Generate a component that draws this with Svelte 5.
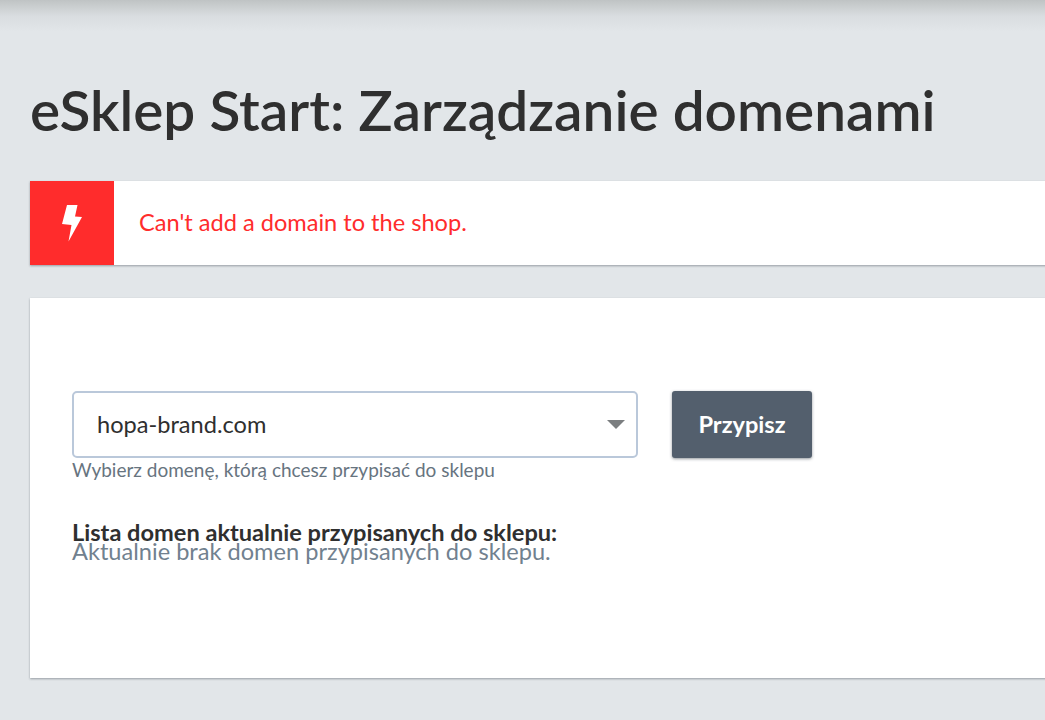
<script>
  let domain = $state('hopa-brand.com');
</script>

<div class="page">
  <div class="topshade"></div>
  <h1>eSklep Start: Zarządzanie domenami</h1>

  <div class="alert">
    <div class="alert-icon">
      <svg width="20" height="37" viewBox="0 0 20 37" aria-hidden="true">
        <path d="M5 0 L15.5 0 L13 11.5 L20 12 L6.5 36.5 L9.5 20 L0 19 Z" fill="#fff" />
      </svg>
    </div>
    <p class="alert-text">Can't add a domain to the shop.</p>
  </div>

  <div class="card">
    <div class="form-row">
      <div class="field">
        <div class="select">
          <span>{domain}</span>
          <i class="caret"></i>
        </div>
        <small>Wybierz domenę, którą chcesz przypisać do sklepu</small>
      </div>
      <button type="button">Przypisz</button>
    </div>
    <h2>Lista domen aktualnie przypisanych do sklepu:</h2>
    <p class="empty">Aktualnie brak domen przypisanych do sklepu.</p>
  </div>
</div>

<style>
  :global(body) {
    margin: 0;
    background: #e2e6e9;
    overflow: hidden;
  }
  .page {
    position: relative;
    width: 1045px;
    height: 720px;
    overflow: hidden;
    padding: 78px 0 0 30px;
    box-sizing: border-box;
    background: #e2e6e9;
    font-family: Lato, "Open Sans", sans-serif;
  }
  .topshade {
    position: absolute;
    left: 0;
    right: 0;
    top: 0;
    height: 32px;
    background: linear-gradient(#bfc3c4 0, #c6cacb 4px, #d9dde0 16px, #e2e6e9 32px);
  }
  h1 {
    position: relative;
    margin: 0 0 41px;
    font-size: 56.7px;
    line-height: 62px;
    font-weight: 600;
    color: #2f2f2f;
    white-space: nowrap;
  }
  .alert {
    display: flex;
    align-items: center;
    width: 1100px;
    height: 84px;
    background: #fff;
    box-shadow: 0 1px 2px rgba(60, 70, 80, 0.45);
  }
  .alert-icon {
    display: flex;
    align-items: center;
    justify-content: center;
    width: 84px;
    height: 84px;
    background: #ff2c2c;
  }
  .alert-text {
    margin: 0 0 2px 25px;
    font-size: 23.6px;
    color: #ff2c2c;
  }
  .card {
    width: 1100px;
    height: 380px;
    margin-top: 33px;
    padding: 93px 0 0 42px;
    box-sizing: border-box;
    background: #fff;
    box-shadow: 0 1px 2px rgba(60, 70, 80, 0.45);
  }
  .form-row {
    display: flex;
    align-items: flex-start;
    gap: 34px;
  }
  .field {
    width: 566px;
  }
  .select {
    display: flex;
    align-items: center;
    justify-content: space-between;
    height: 67px;
    padding: 0 11px 2px 23px;
    box-sizing: border-box;
    border: 2px solid #bac8da;
    border-radius: 5px;
    font-size: 23.6px;
    color: #2f2f2f;
  }
  .caret {
    width: 0;
    height: 0;
    margin-top: 2px;
    border-left: 9px solid transparent;
    border-right: 9px solid transparent;
    border-top: 9px solid #7b7e80;
  }
  small {
    display: block;
    margin-top: 1px;
    font-size: 19px;
    line-height: 22px;
    color: #67747f;
  }
  button {
    width: 140px;
    height: 67px;
    padding: 0 0 2px;
    border: 0;
    border-radius: 3px;
    background: #535f6d;
    color: #fff;
    font-family: inherit;
    font-size: 23.6px;
    font-weight: 700;
    box-shadow: 0 1px 3px rgba(40, 50, 60, 0.5);
  }
  h2 {
    margin: 39px 0 0;
    font-size: 23.6px;
    line-height: 24px;
    font-weight: 700;
    color: #2f2f2f;
  }
  .empty {
    margin: -5px 0 0;
    font-size: 23.6px;
    line-height: 24px;
    color: #71818f;
  }
</style>
